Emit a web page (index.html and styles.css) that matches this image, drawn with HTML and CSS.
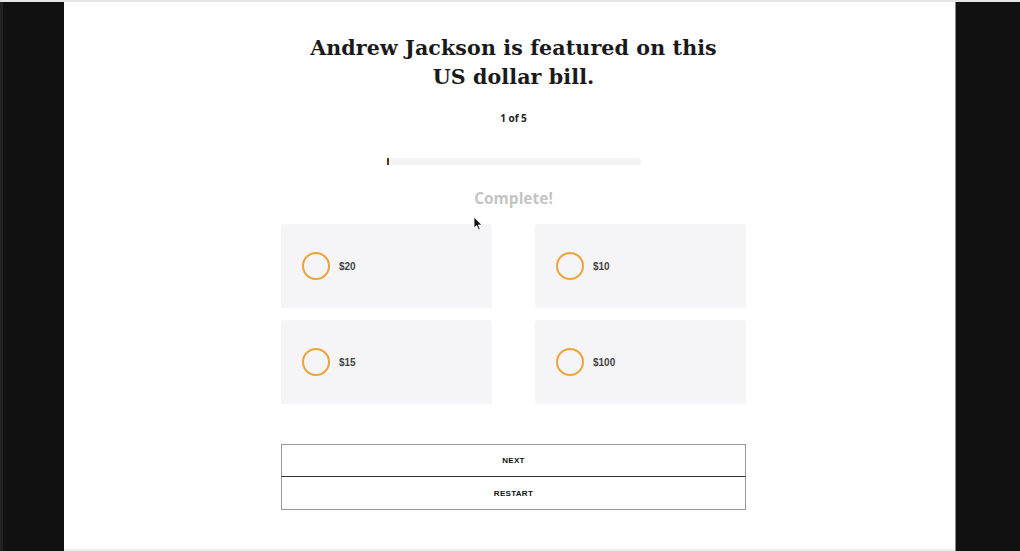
FILE: index.html
```html
<!DOCTYPE html>
<html>
<head>
<meta charset="utf-8">
<link rel="stylesheet" href="styles.css">
</head>
<body>
<div class="frame">
  <div class="side side-left"></div>
  <main class="page">
    <h1 class="question">Andrew Jackson is featured on this<br>US dollar bill.</h1>
    <div class="count">1 of 5</div>
    <div class="progress"><div class="progress-fill" style="width:2px"></div></div>
    <div class="complete">Complete!</div>
    <div class="answers">
      <div class="answer"><span class="radio"></span><span class="label">$20</span></div>
      <div class="answer"><span class="radio"></span><span class="label">$10</span></div>
      <div class="answer"><span class="radio"></span><span class="label">$15</span></div>
      <div class="answer"><span class="radio"></span><span class="label">$100</span></div>
    </div>
    <div class="buttons">
      <button class="btn btn-next">NEXT</button>
      <button class="btn btn-restart">RESTART</button>
    </div>
    <svg class="cursor" width="10" height="15" viewBox="0 0 10 15"><path d="M1 1 L1 12 L3.6 9.6 L5.6 14 L7.2 13.3 L5.3 9 L8.8 9 Z" fill="#111" stroke="#fff" stroke-width="0.8"/></svg>
  </main>
  <div class="side side-right"></div>
</div>
</body>
</html>
```

FILE: styles.css
```css
html, body {
  margin: 0;
  padding: 0;
  background: #111;
}
.frame {
  display: flex;
  width: 1020px;
  height: 551px;
  border-top: 2px solid #e6e6e6;
  box-sizing: border-box;
  overflow: hidden;
}
.side {
  background: #111;
  height: 100%;
}
.side-left {
  width: 61px;
  border-left: 3px solid #222;
}
.side-right {
  width: 64px;
  border-left: 1px solid #888;
}
.page {
  position: relative;
  width: 891px;
  padding-left: 8px;
  background: #fff;
  display: flex;
  flex-direction: column;
  align-items: center;
  font-family: "Liberation Sans", Arial, sans-serif;
  border-bottom: 2px solid #eee;
  box-sizing: border-box;
}
.question {
  margin: 32px 0 0;
  font-family: "DejaVu Serif", serif;
  font-weight: bold;
  font-size: 20.6px;
  line-height: 29px;
  color: #1a1a1a;
  text-align: center;
  letter-spacing: 0.1px;
}
.count {
  margin-top: 19px;
  font-family: "Open Sans", sans-serif;
  font-weight: 700;
  font-size: 10px;
  color: #222;
}
.progress {
  margin-top: 33px;
  width: 255px;
  height: 7px;
  border-radius: 4px;
  background: #f3f3f3;
}
.progress-fill {
  height: 7px;
  margin-left: 1px;
  background: #5a3a10;
}
.complete {
  margin-top: 22px;
  font-family: "Open Sans", sans-serif;
  font-weight: 700;
  font-size: 15.5px;
  color: #c4c4c4;
}
.answers {
  margin-top: 15px;
  display: grid;
  grid-template-columns: 211px 211px;
  column-gap: 43px;
  row-gap: 12px;
}
.answer {
  height: 84px;
  background: #f5f5f7;
  border-radius: 3px;
  display: flex;
  align-items: center;
  padding-left: 21px;
  box-sizing: border-box;
}
.radio {
  width: 24px;
  height: 24px;
  border: 2px solid #f0a33a;
  border-radius: 50%;
  background: transparent;
}
.label {
  margin-left: 9px;
  font-size: 10px;
  font-weight: bold;
  color: #444;
}
.buttons {
  margin-top: 40px;
  width: 465px;
  display: flex;
  flex-direction: column;
}
.btn {
  height: 33px;
  background: #fff;
  border: 1px solid #999;
  font-family: "Liberation Sans", Arial, sans-serif;
  font-weight: bold;
  font-size: 8px;
  color: #111;
  letter-spacing: 0.3px;
  padding: 0;
}
.btn-next {
  border-bottom: 1px solid #333;
}
.btn-restart {
  border-top: none;
  height: 33px;
}
.cursor {
  position: absolute;
  left: 409px;
  top: 214px;
}
```
